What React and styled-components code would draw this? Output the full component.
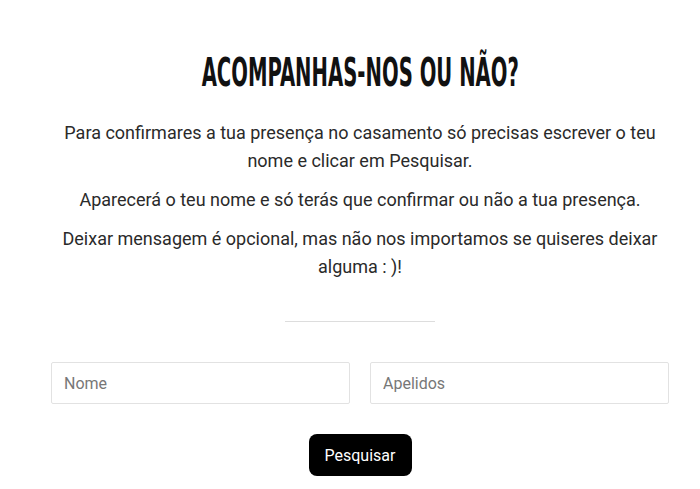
import React from "react";
import styled, { createGlobalStyle } from "styled-components";

const GlobalStyle = createGlobalStyle`
    body {
        margin: 0;
        background: #fff;
        font-family: Roboto, "Noto Sans", sans-serif;
    }
`;

const Section = styled.section`
    box-sizing: border-box;
    width: 700px;
    padding: 53px 31px 0 51px;
    display: flex;
    flex-direction: column;
    align-items: center;
`;

const Title = styled.h2`
    margin: 0 0 27px;
    text-align: center;
    line-height: 1;
`;

const TitleText = styled.span`
    display: inline-block;
    font-family: "DejaVu Sans Condensed", "DejaVu Sans", sans-serif;
    font-stretch: condensed;
    font-weight: 700;
    font-size: 39px;
    color: #111;
    transform: scaleX(0.56);
`;

const Text = styled.p`
    margin: 0 0 11px;
    text-align: center;
    font-size: 18px;
    line-height: 28px;
    color: #2a2a2a;
`;

const Divider = styled.hr`
    width: 150px;
    border: 0;
    border-top: 1px solid #ddd;
    margin: 29px 0 40px;
`;

const Fields = styled.div`
    display: grid;
    grid-template-columns: 1fr 1fr;
    gap: 20px;
    width: 100%;
`;

const Input = styled.input`
    box-sizing: border-box;
    height: 42px;
    padding: 0 12px;
    border: 1px solid #e2e2e2;
    border-radius: 2px;
    font-family: Roboto, sans-serif;
    font-size: 16px;
    color: #333;
    outline: none;

    &::placeholder {
        color: #777;
    }
`;

const Button = styled.button`
    margin-top: 30px;
    width: 103px;
    height: 42px;
    border: 0;
    border-radius: 8px;
    background: #000;
    color: #fff;
    font-family: Roboto, sans-serif;
    font-size: 16px;
    cursor: pointer;
`;

export default function App() {
    return (
        <>
            <GlobalStyle />
            <Section>
                <Title>
                    <TitleText>ACOMPANHAS-NOS OU NÃO?</TitleText>
                </Title>
                <Text>
                    Para confirmares a tua presença no casamento só precisas escrever o teu nome e clicar em Pesquisar.
                </Text>
                <Text>Aparecerá o teu nome e só terás que confirmar ou não a tua presença.</Text>
                <Text>Deixar mensagem é opcional, mas não nos importamos se quiseres deixar alguma : )!</Text>
                <Divider />
                <Fields>
                    <Input placeholder="Nome" />
                    <Input placeholder="Apelidos" />
                </Fields>
                <Button>Pesquisar</Button>
            </Section>
        </>
    );
}
